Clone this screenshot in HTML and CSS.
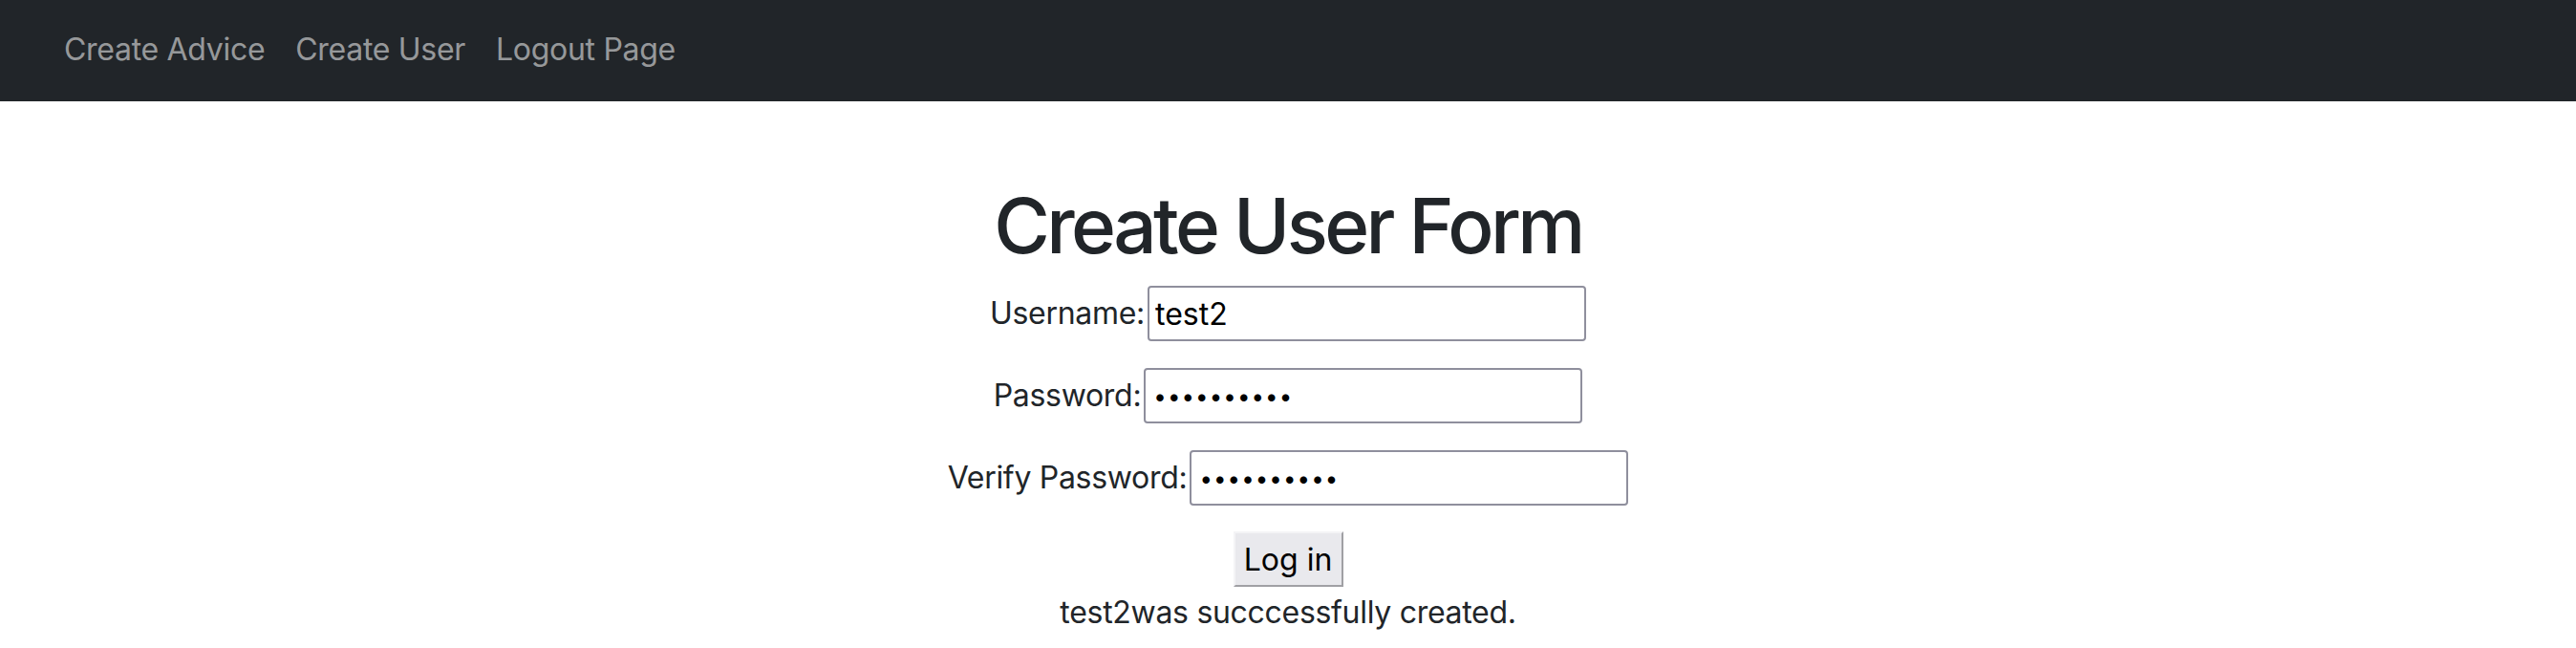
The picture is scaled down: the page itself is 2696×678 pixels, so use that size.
FILE: index.html
```html
<!DOCTYPE html>
<html lang="en">
<head>
<meta charset="utf-8">
<title>Create User</title>
<link rel="stylesheet" href="styles.css">
</head>
<body>
<nav class="navbar">
  <ul class="nav-list">
    <li><a class="nav-link" href="#">Create Advice</a></li>
    <li><a class="nav-link" href="#">Create User</a></li>
    <li><a class="nav-link" href="#">Logout Page</a></li>
  </ul>
</nav>
<main class="content">
  <h1 class="title">Create User Form</h1>
  <form class="user-form">
    <div class="form-row">
      <label class="field-label" for="username">Username:</label><input class="field-input" id="username" type="text" value="test2">
    </div>
    <div class="form-row">
      <label class="field-label" for="password">Password:</label><input class="field-input secret" id="password" type="password" value="abcdefghij">
    </div>
    <div class="form-row">
      <label class="field-label" for="verify">Verify Password:</label><input class="field-input secret" id="verify" type="password" value="abcdefghij">
    </div>
    <div class="button-row">
      <button class="submit-btn" type="button">Log in</button>
    </div>
  </form>
  <p class="message">test2was succcessfully created.</p>
</main>
</body>
</html>
```
FILE: styles.css
```css
* {
  box-sizing: border-box;
}

html, body {
  margin: 0;
  padding: 0;
  background: #ffffff;
}

body {
  font-family: Inter, "Noto Sans", "Liberation Sans", sans-serif;
  font-size: 32px;
  line-height: 48px;
  color: #212529;
}

.navbar {
  background: #212529;
  height: 106px;
  display: flex;
  align-items: center;
  padding-bottom: 3px;
}

.nav-list {
  list-style: none;
  margin: 0;
  padding: 0 0 0 51px;
  display: flex;
}

.nav-link {
  display: block;
  padding: 0 16px;
  color: rgba(255, 255, 255, 0.55);
  text-decoration: none;
  letter-spacing: -0.3px;
}

.content {
  text-align: center;
  padding-top: 82px;
}

.title {
  font-size: 80px;
  line-height: 96px;
  font-weight: 500;
  margin: 0 0 15px;
  letter-spacing: -3.6px;
}

.user-form {
  margin: 0;
}

.form-row {
  display: flex;
  justify-content: center;
  align-items: center;
  height: 58px;
  margin-bottom: 28px;
}

.field-label {
  letter-spacing: -0.3px;
  margin-right: 3px;
}

.field-input {
  width: 459px;
  height: 58px;
  border: 2px solid #8f8f9d;
  border-radius: 4px;
  padding: 0 6px;
  font-family: inherit;
  font-size: 32px;
  color: #000000;
  background: #ffffff;
  outline: none;
}

.field-input.secret {
  font-size: 24px;
  letter-spacing: 1.1px;
  padding: 0 8px;
}

.button-row {
  display: flex;
  justify-content: center;
  margin-top: -1px;
}

.submit-btn {
  width: 115px;
  height: 58px;
  padding: 0;
  font-family: inherit;
  font-size: 32px;
  color: #000000;
  background: #e9e9ed;
  border: 2px solid;
  border-color: #f4f4f6 #a0a0a4 #a0a0a4 #f4f4f6;
  border-radius: 0;
}

.message {
  margin: 3px 0 0;
  letter-spacing: -0.3px;
}
```
